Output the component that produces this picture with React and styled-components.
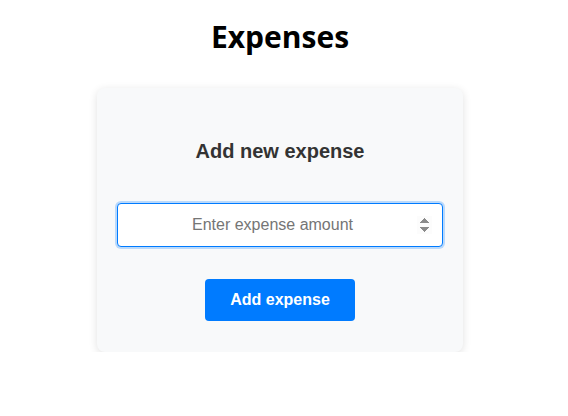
import React from 'react'
import styled, { createGlobalStyle } from 'styled-components'

const GlobalStyle = createGlobalStyle`
  body {
    margin: 0;
    background: #ffffff;
    font-family: "Liberation Sans", Arial, sans-serif;
  }
`

function App() {
  return (
    <>
      <GlobalStyle />
      <Page>
        <Title>Expenses</Title>
        <Card>
          <Heading>Add new expense</Heading>
          <AmountInput type="number" placeholder="Enter expense amount" autoFocus />
          <AddButton type="button">Add expense</AddButton>
        </Card>
      </Page>
    </>
  )
}

const Page = styled.div`
  width: 560px;
  padding-top: 17px;
  display: flex;
  flex-direction: column;
  align-items: center;
`
const Title = styled.h1`
  margin: 0 0 31px;
  font-family: "Open Sans", "Noto Sans", sans-serif;
  font-weight: 700;
  font-size: 30px;
  line-height: 40px;
  color: #000;
`
const Card = styled.div`
  width: 326px;
  padding: 20px 20px 31px;
  background: #f8f9fa;
  border-radius: 8px;
  box-shadow: 0 2px 8px rgba(0, 0, 0, 0.12);
  display: flex;
  flex-direction: column;
  align-items: center;
`
const Heading = styled.h2`
  margin: 32px 0 40px;
  font-size: 20px;
  line-height: 23px;
  font-weight: 700;
  color: #333;
`
const AmountInput = styled.input`
  box-sizing: border-box;
  width: 326px;
  height: 44px;
  padding: 0 10px;
  margin-bottom: 32px;
  font-family: "Liberation Sans", Arial, sans-serif;
  font-size: 16px;
  text-align: center;
  color: #333;
  background: #fff;
  border: 1px solid #007bff;
  border-radius: 4px;
  box-shadow: 0 0 0 2px rgba(0, 123, 255, 0.25);
  outline: none;
  &::placeholder {
    color: #757575;
  }
`
const AddButton = styled.button`
  width: 150px;
  height: 42px;
  border: none;
  border-radius: 4px;
  background: #007bff;
  color: #fff;
  font-family: "Liberation Sans", Arial, sans-serif;
  font-size: 16px;
  font-weight: 700;
  cursor: pointer;
`

export default App
